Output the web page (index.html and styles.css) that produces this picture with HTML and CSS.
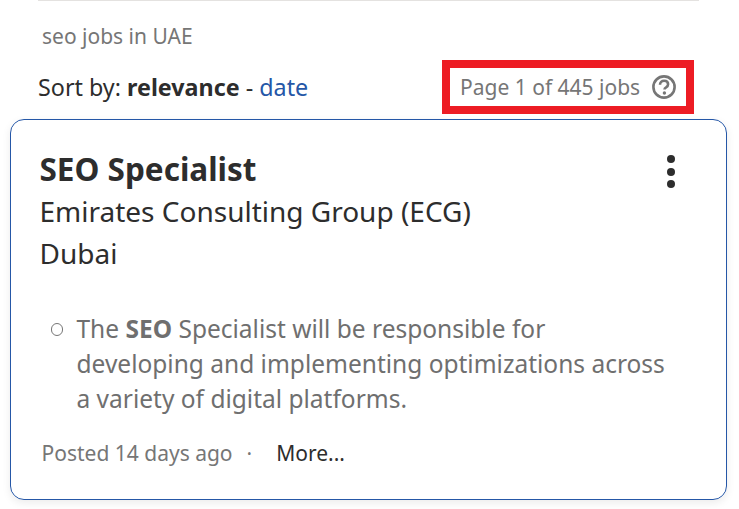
FILE: index.html
```html
<!DOCTYPE html>
<html lang="en">
<head>
<meta charset="utf-8">
<title>seo jobs in UAE</title>
<link rel="stylesheet" href="styles.css">
</head>
<body>
<div class="page">
  <div class="rule"></div>
  <h2 class="query">seo jobs in UAE</h2>
  <div class="toolbar">
    <div class="sort">Sort by: <b>relevance</b> - <a href="#">date</a></div>
    <div class="count">
      <span>Page 1 of 445 jobs</span>
      <svg class="help" width="24" height="24" viewBox="0 0 24 24" aria-hidden="true">
        <circle cx="12" cy="12" r="10.6" fill="none" stroke="#767676" stroke-width="2.6"/>
        <path d="M8 9.7c0-2.4 1.7-3.9 4.1-3.9 2.3 0 4 1.3 4 3.4 0 1.6-.9 2.4-2 3.1-1 .6-1.6 1.1-1.6 2.3" fill="none" stroke="#767676" stroke-width="2.6"/>
        <circle cx="12.4" cy="18" r="1.7" fill="#767676"/>
      </svg>
    </div>
  </div>
  <article class="card">
    <div class="head">
      <div>
        <h3 class="title">SEO Specialist</h3>
        <div class="line">Emirates Consulting Group (ECG)</div>
        <div class="line">Dubai</div>
      </div>
      <div class="menu"><i></i><i></i><i></i></div>
    </div>
    <ul class="desc">
      <li>The <b>SEO</b> Specialist will be responsible for developing and implementing optimizations across a variety of digital platforms.</li>
    </ul>
    <div class="foot"><span>Posted 14 days ago</span><span class="dot">·</span><a href="#">More...</a></div>
  </article>
</div>
</body>
</html>
```
FILE: styles.css
```css
* { box-sizing: border-box; }
html, body { margin: 0; background: #fff; }
body { font-family: "Noto Sans", sans-serif; color: #2d2d2d; overflow: hidden; }
.page { width: 739px; height: 509px; padding-left: 10px; display: flex; flex-direction: column; }
.rule { margin-left: 28px; width: 661px; height: 1px; background: #e4e2e0; flex: none; }
.query { margin: 21px 0 0 32px; font-size: 21px; line-height: 28px; font-weight: 400; color: #767676; }
.toolbar { margin: 10px 0 0 28px; width: 656px; display: flex; justify-content: space-between; align-items: center; height: 54px; }
.sort { font-size: 23.3px; line-height: 32px; }
.sort a { color: #2557a7; text-decoration: none; }
.count { width: 252px; height: 54px; border: 8px solid #ed1c24; display: flex; align-items: center; padding-left: 10px; gap: 12px; font-size: 21px; color: #767676; }
.help { flex: none; }
.card { margin-top: 5px; width: 717px; height: 381px; border: 1px solid #2557a7; border-radius: 14px; box-shadow: 0 3px 8px rgba(0,0,0,.08); padding: 28px 29px 0 28.5px; }
.head { display: flex; justify-content: space-between; }
.title { margin: 0; font-size: 31.5px; line-height: 42px; font-weight: 700; }
.line { font-size: 28px; line-height: 42px; }
.menu { display: flex; flex-direction: column; gap: 4.6px; margin: 7px 22px 0 0; }
.menu i { width: 8px; height: 8px; border-radius: 50%; background: #2d2d2d; }
.desc { margin: 37px 0 0; padding: 0 20px 0 37px; list-style: none; font-size: 24.5px; line-height: 35px; color: #6f6f6f; }
.desc li { position: relative; }
.desc li::before { content: ""; position: absolute; left: -26px; top: 12px; width: 10.5px; height: 10.5px; border: 1.3px solid #767676; border-radius: 50%; }
.foot { margin-top: 23px; padding-left: 2px; font-size: 21px; line-height: 29px; color: #767676; display: flex; }
.dot { margin: 0 24px 0 14px; }
.foot a { color: #2d2d2d; text-decoration: none; }
```
